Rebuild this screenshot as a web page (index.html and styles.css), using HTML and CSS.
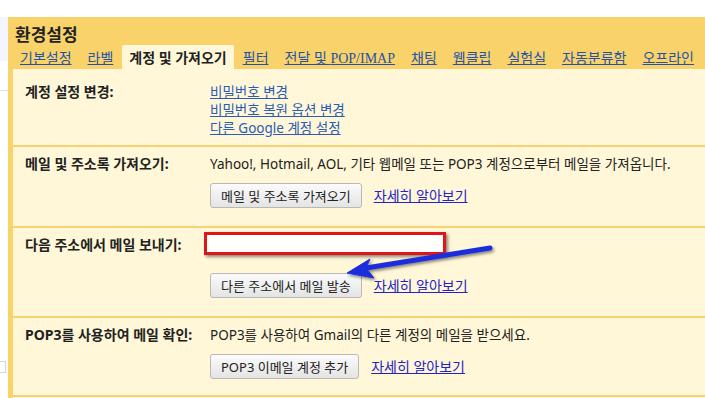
FILE: index.html
```html
<!DOCTYPE html>
<html lang="ko">
<head>
    <meta charset="UTF-8">
    <title>환경설정</title>
    <link rel="stylesheet" href="styles.css">
</head>
<body>
    <div class="page">
        <div class="side">
            <div class="side-top"></div>
            <div class="side-line"></div>
            <div class="side-box"></div>
        </div>

        <div class="settings">
            <h1>환경설정</h1>
            <ul class="tabs">
                <li><a href="#">기본설정</a></li>
                <li><a href="#">라벨</a></li>
                <li class="active">계정 및 가져오기</li>
                <li><a href="#">필터</a></li>
                <li><a href="#">전달 및 <span class="serif">POP/IMAP</span></a></li>
                <li><a href="#">채팅</a></li>
                <li><a href="#">웹클립</a></li>
                <li><a href="#">실험실</a></li>
                <li><a href="#">자동분류함</a></li>
                <li><a href="#">오프라인</a></li>
            </ul>

            <div class="panel">
                <div class="row first">
                    <div class="label">계정 설정 변경:</div>
                    <div class="value links">
                        <a href="#">비밀번호 변경</a>
                        <a href="#">비밀번호 복원 옵션 변경</a>
                        <a href="#">다른 Google 계정 설정</a>
                    </div>
                </div>

                <div class="row">
                    <div class="label">메일 및 주소록 가져오기:</div>
                    <div class="value">
                        <div>Yahoo!, Hotmail, AOL, 기타 웹메일 또는 POP3 계정으로부터 메일을 가져옵니다.</div>
                        <div class="actions">
                            <button class="btn">메일 및 주소록 가져오기</button>
                            <a href="#" class="help">자세히 알아보기</a>
                        </div>
                    </div>
                </div>

                <div class="row">
                    <div class="label">다음 주소에서 메일 보내기:</div>
                    <div class="value">
                        <div class="hidden-address"></div>
                        <div class="actions wide">
                            <button class="btn">다른 주소에서 메일 발송</button>
                            <a href="#" class="help">자세히 알아보기</a>
                        </div>
                    </div>
                </div>

                <div class="row">
                    <div class="label">POP3를 사용하여 메일 확인:</div>
                    <div class="value">
                        <div>POP3를 사용하여 Gmail의 다른 계정의 메일을 받으세요.</div>
                        <div class="actions">
                            <button class="btn">POP3 이메일 계정 추가</button>
                            <a href="#" class="help">자세히 알아보기</a>
                        </div>
                    </div>
                </div>
            </div>
        </div>

        <!-- annotation arrow drawn over the screenshot -->
        <svg class="arrow" width="705" height="398" viewBox="0 0 705 398">
            <defs>
                <filter id="shadow" x="-10%" y="-50%" width="120%" height="200%">
                    <feDropShadow dx="1.5" dy="2" stdDeviation="1.5" flood-color="#000" flood-opacity="0.45"/>
                </filter>
            </defs>
            <g filter="url(#shadow)" fill="#1f2fdc" stroke="#1f2fdc">
                <line x1="490" y1="248" x2="366" y2="268" stroke-width="5" stroke-linecap="round"/>
                <polygon points="347,273 370,259 366,268 374,278" stroke-width="1" stroke-linejoin="round"/>
            </g>
        </svg>
    </div>
</body>
</html>
```

FILE: styles.css
```css
body {
    margin: 0;
    background-color: #fff;
    font-family: "Noto Sans", "Noto Sans CJK KR", sans-serif;
    font-size: 13.5px;
    color: #222;
}

.page {
    position: relative;
    display: flex;
    width: 705px;
    height: 398px;
    overflow: hidden;
}

.side {
    width: 8px;
    flex-shrink: 0;
}

.side-top {
    height: 44px;
    margin-top: 17px;
    background-color: #f3f6fc;
}

.side-line {
    height: 1px;
    margin-top: 29px;
    background-color: #e2e2e2;
}

.side-box {
    height: 10px;
    margin-top: 270px;
    border: 1px solid #d6d6d6;
    border-left: none;
    width: 5px;
}

.settings {
    flex: 1;
    margin-top: 17px;
    padding-left: 5px;
    background-color: #f9d26a;
}

h1 {
    margin: 0 0 0 2px;
    padding-top: 8px;
    font-size: 17px;
    line-height: 20px;
    font-weight: bold;
    color: #222;
}

.tabs {
    display: flex;
    margin: 0;
    padding: 0;
    list-style: none;
    white-space: nowrap;
    font-size: 14px;
}

.tabs li {
    padding: 2px 7px 0;
    margin-right: 2px;
    line-height: 21px;
}

.tabs a {
    color: #2452a8;
}

.tabs .active {
    background-color: #fff7d7;
    font-weight: bold;
    border-radius: 2px 2px 0 0;
}

.serif {
    font-family: "Liberation Serif", serif;
    font-size: 14px;
}

.panel {
    background-color: #fff7d7;
    height: 100%;
}

.row {
    display: flex;
    padding: 8px 0 18px 12px;
    line-height: 18px;
    border-bottom: 2px solid #f7d273;
}

.row.first {
    padding-top: 14px;
    padding-bottom: 8px;
}

.row:last-child {
    padding-bottom: 16px;
}

.label {
    width: 185px;
    flex-shrink: 0;
    font-size: 14px;
    font-weight: bold;
}

.value {
    flex: 1;
    white-space: nowrap;
}

.links {
    display: flex;
    flex-direction: column;
    align-items: flex-start;
}

.links a {
    color: #2a5cb8;
}

.actions {
    display: flex;
    align-items: center;
    gap: 12px;
    margin-top: 10px;
}

.actions.wide {
    margin-top: 18px;
}

.btn {
    height: 25px;
    padding: 0 10px;
    font-family: inherit;
    font-size: 13px;
    color: #222;
    border: 1px solid #b8b8b8;
    border-radius: 3px;
    background: linear-gradient(#fbfbfb, #e4e4e4);
    cursor: pointer;
}

.help {
    font-size: 14px;
    color: #2323cc;
}

.hidden-address {
    width: 236px;
    height: 17px;
    margin: -4px 0 0 -6px;
    border: 3px solid #e0141b;
    background-color: #fff;
    box-shadow: 2px 2px 3px rgba(0, 0, 0, 0.45);
}

.arrow {
    position: absolute;
    left: 0;
    top: 0;
    pointer-events: none;
}
```
